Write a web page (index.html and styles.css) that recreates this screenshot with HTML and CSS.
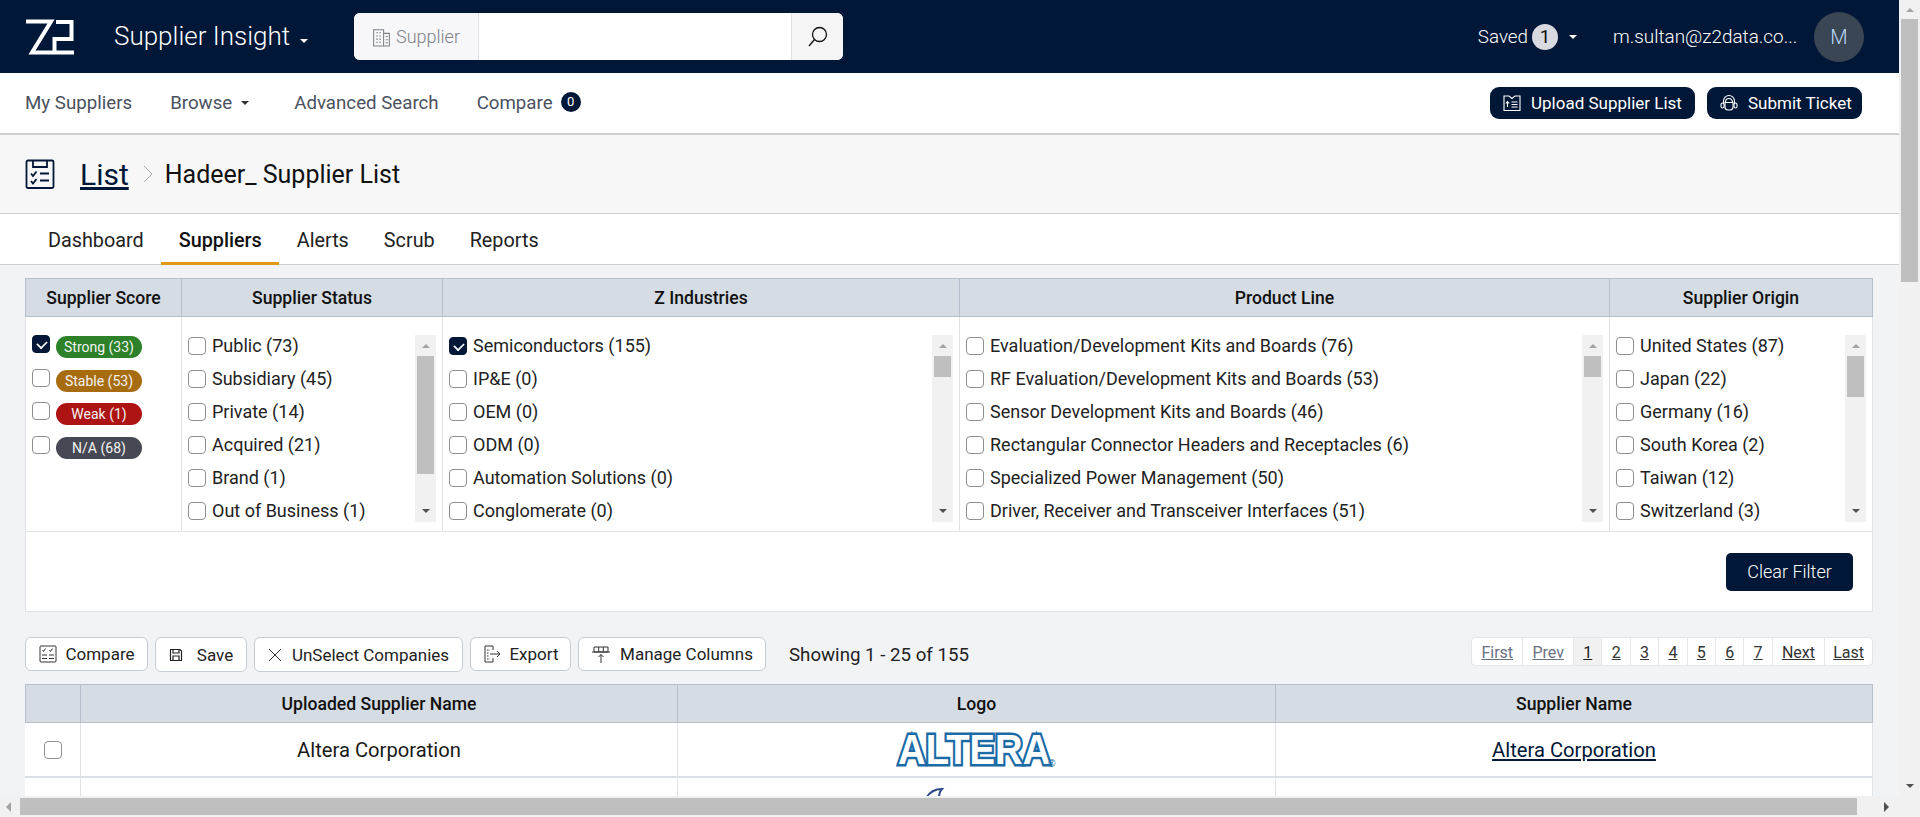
FILE: index.html
```html
<!DOCTYPE html>
<html lang="en">
<head>
<meta charset="utf-8">
<title>Supplier Insight</title>
<link rel="stylesheet" href="styles.css">
</head>
<body>
<div class="shell">
<div class="viewport">
<header class="topbar">
  <svg class="logo" viewBox="0 0 48 36" fill="none" stroke="#fff" stroke-width="4"><path d="M0 2.500H25L6 33.500H48M30 3H45.500V20H28.500V33.500"/></svg>
  <div class="app-title">Supplier Insight <span class="caret-w caret-title"></span></div>
  <div class="search">
    <div class="search-type">
      <svg class="i-building" viewBox="0 0 18 20" fill="none" stroke="#7c8088" stroke-width="1"><path d="M1.500 19V3.500H11V19ZM11 7H16.500V19H11M1 19H17M4 6.500H5.500M7 6.500H8.500M4 9.500H5.500M7 9.500H8.500M4 12.500H5.500M7 12.500H8.500M4 15.500H5.500M7 15.500H8.500M13 10H15M13 13H15M13 16H15"/></svg>
      <span>Supplier</span>
    </div>
    <div class="search-input"></div>
    <div class="search-btn"><svg class="i24" viewBox="0 0 24 24" fill="none" stroke="#111" stroke-width="1.300"><circle cx="13.500" cy="9.500" r="7"/><path d="M8.500 14.500L3 21"/></svg></div>
  </div>
  <div class="top-right">
    <div class="saved">Saved <span class="saved-count">1</span><span class="caret-w"></span></div>
    <div class="email">m.sultan@z2data.co...</div>
    <div class="avatar">M</div>
  </div>
</header>
<nav class="subnav">
  <a class="nav-item">My Suppliers</a>
  <a class="nav-item">Browse <span class="caret-d"></span></a>
  <a class="nav-item">Advanced Search</a>
  <a class="nav-item">Compare <span class="count-dot">0</span></a>
  <div class="nav-actions">
    <button class="pill-btn pill-upload">
      <svg class="i18" viewBox="0 0 18 18" fill="none" stroke="#fff" stroke-width="1.100"><path d="M1 2H6L9 4.500 12 2H17V16.500H1ZM4.500 13V8M2.800 9.500L4.500 7.500 6.200 9.500M8.500 8H14.500M8.500 10.500H14.500M8.500 13H14.500"/></svg>
      Upload Supplier List</button>
    <button class="pill-btn pill-ticket">
      <svg class="i18" viewBox="0 0 18 18" fill="none" stroke="#fff" stroke-width="1.100"><path d="M3.500 9.500V7a5.500 5.500 0 0 1 11 0V9.500"/><path d="M5.500 8A3.500 3.500 0 0 1 12.500 8"/><rect x="1" y="9" width="3" height="5" rx="1.500"/><rect x="14" y="9" width="3" height="5" rx="1.500"/><path d="M5 8.500H13V13a3 3 0 0 1-3 3H8a3 3 0 0 1-3-3Z"/></svg>
      Submit Ticket</button>
  </div>
</nav>
<section class="crumbs">
  <svg class="crumb-icon" viewBox="0 0 30 30" fill="none" stroke="#001737" stroke-width="1.800"><rect x="1.500" y="1.500" width="27" height="27.500" rx="1.500"/><path d="M8 1.500V8H22V1.500"/><path d="M6 14.500L8 17 11.500 12.500M15 14.500H24M6 22L8 24.500 11.500 20M15 21.500H24"/></svg>
  <a class="crumb-link">List</a>
  <svg class="crumb-sep" viewBox="0 0 10 18" fill="none" stroke="#aaa" stroke-width="1"><path d="M1 1L9 9 1 17"/></svg>
  <span class="crumb-current">Hadeer_ Supplier List</span>
</section>
<div class="tabs">
  <a class="tab">Dashboard</a>
  <a class="tab tab-active">Suppliers</a>
  <a class="tab">Alerts</a>
  <a class="tab">Scrub</a>
  <a class="tab">Reports</a>
</div>
<main class="content">
  <section class="filters">
    <div class="filter-grid">
      <div class="fh">Supplier Score</div>
      <div class="fh">Supplier Status</div>
      <div class="fh">Z Industries</div>
      <div class="fh">Product Line</div>
      <div class="fh">Supplier Origin</div>

      <div class="fb score">
        <label class="score-row"><span class="cb cb-on"></span><span class="tag tag-strong">Strong (33)</span></label>
        <label class="score-row"><span class="cb"></span><span class="tag tag-stable">Stable (53)</span></label>
        <label class="score-row"><span class="cb"></span><span class="tag tag-weak">Weak (1)</span></label>
        <label class="score-row"><span class="cb"></span><span class="tag tag-na">N/A (68)</span></label>
      </div>
      <div class="fb">
        <div class="list">
          <label class="row"><span class="cb"></span>Public (73)</label>
          <label class="row"><span class="cb"></span>Subsidiary (45)</label>
          <label class="row"><span class="cb"></span>Private (14)</label>
          <label class="row"><span class="cb"></span>Acquired (21)</label>
          <label class="row"><span class="cb"></span>Brand (1)</label>
          <label class="row"><span class="cb"></span>Out of Business (1)</label>
        </div>
        <div class="mini-sb"><span class="up"></span><div class="mini-track"><div class="mini-thumb th-status"></div></div><span class="down"></span></div>
      </div>
      <div class="fb">
        <div class="list">
          <label class="row"><span class="cb cb-on"></span>Semiconductors (155)</label>
          <label class="row"><span class="cb"></span>IP&amp;E (0)</label>
          <label class="row"><span class="cb"></span>OEM (0)</label>
          <label class="row"><span class="cb"></span>ODM (0)</label>
          <label class="row"><span class="cb"></span>Automation Solutions (0)</label>
          <label class="row"><span class="cb"></span>Conglomerate (0)</label>
        </div>
        <div class="mini-sb"><span class="up"></span><div class="mini-track"><div class="mini-thumb th-small"></div></div><span class="down"></span></div>
      </div>
      <div class="fb">
        <div class="list">
          <label class="row"><span class="cb"></span>Evaluation/Development Kits and Boards (76)</label>
          <label class="row"><span class="cb"></span>RF Evaluation/Development Kits and Boards (53)</label>
          <label class="row"><span class="cb"></span>Sensor Development Kits and Boards (46)</label>
          <label class="row"><span class="cb"></span>Rectangular Connector Headers and Receptacles (6)</label>
          <label class="row"><span class="cb"></span>Specialized Power Management (50)</label>
          <label class="row"><span class="cb"></span>Driver, Receiver and Transceiver Interfaces (51)</label>
        </div>
        <div class="mini-sb"><span class="up"></span><div class="mini-track"><div class="mini-thumb th-small"></div></div><span class="down"></span></div>
      </div>
      <div class="fb">
        <div class="list">
          <label class="row"><span class="cb"></span>United States (87)</label>
          <label class="row"><span class="cb"></span>Japan (22)</label>
          <label class="row"><span class="cb"></span>Germany (16)</label>
          <label class="row"><span class="cb"></span>South Korea (2)</label>
          <label class="row"><span class="cb"></span>Taiwan (12)</label>
          <label class="row"><span class="cb"></span>Switzerland (3)</label>
        </div>
        <div class="mini-sb"><span class="up"></span><div class="mini-track"><div class="mini-thumb th-origin"></div></div><span class="down"></span></div>
      </div>
    </div>
    <div class="filter-foot"><button class="clear">Clear Filter</button></div>
  </section>
  <div class="toolbar">
    <button class="tool t-compare"><svg class="i20" viewBox="0 0 20 20" fill="none" stroke="#333" stroke-width="1"><rect x="2" y="2" width="16" height="16" rx="1"/><path d="M4.500 6L5.500 7.500 7.500 4.500M11.500 6L12.500 7.500 14.500 4.500M4 11H9M11 11H16M4 14.500H9M11 14.500H16"/></svg>Compare</button>
    <button class="tool t-save"><svg class="i14" viewBox="0 0 14 14" fill="none" stroke="#222" stroke-width="1.200"><path d="M1.500 1.500H11L12.500 3V12.500H1.500ZM4 1.500V5H10V1.500M4 12.500V8H10V12.500"/></svg>Save</button>
    <button class="tool t-unselect"><svg class="i14" viewBox="0 0 14 14" fill="none" stroke="#333" stroke-width="1"><path d="M1 1L13 13M13 1L1 13"/></svg>UnSelect Companies</button>
    <button class="tool t-export"><svg class="i20" viewBox="0 0 20 20" fill="none" stroke="#333" stroke-width="1"><path d="M11 6V2H3V18H11V14"/><path d="M5 6H8M5 9H7M5 12H7M5 15H8" stroke-dasharray="1.500 1"/><path d="M8 10H18M15 7L18 10 15 13"/></svg>Export</button>
    <button class="tool t-manage"><svg class="i20" viewBox="0 0 20 20" fill="none" stroke="#333" stroke-width="1"><path d="M3 3H17V8H3ZM7.700 3V8M12.300 3V8M1 8H19M10 19V10.500M7.500 13L10 10.500 12.500 13"/></svg>Manage Columns</button>
    <div class="showing">Showing 1 - 25 of 155</div>
    <div class="pager">
      <a class="pg pg-off">First</a><a class="pg pg-off">Prev</a><a class="pg pg-cur">1</a><a class="pg">2</a><a class="pg">3</a><a class="pg">4</a><a class="pg">5</a><a class="pg">6</a><a class="pg">7</a><a class="pg">Next</a><a class="pg">Last</a>
    </div>
  </div>
  <section class="results">
    <div class="rh"></div><div class="rh">Uploaded Supplier Name</div><div class="rh">Logo</div><div class="rh">Supplier Name</div>
    <div class="rc rc-check"><span class="cb"></span></div>
    <div class="rc">Altera Corporation</div>
    <div class="rc"><svg class="altera" viewBox="0 -14 162 56"><text y="32.500" transform="translate(2 0) scale(.89 1)" class="altera-text">ALTERA</text><text x="152" y="36" class="altera-r">®</text></svg></div>
    <div class="rc"><a class="link">Altera Corporation</a></div>
    <div class="rc rc-next"></div><div class="rc rc-next"></div>
    <div class="rc rc-next"><svg class="logo2" viewBox="0 0 108 20" fill="none"><path d="M3 10C6 5 12 1 19 1C17 3 16 6 16 10" stroke="#2b4a8c" stroke-width="2"/><path d="M28 9H34" stroke="#888" stroke-width="1"/></svg></div>
    <div class="rc rc-next"></div>
  </section>
</main>
<div class="hbar"><span class="arr-left"></span><div class="hthumb"></div><span class="arr-right"></span></div>
</div>
<div class="vbar"><span class="up"></span><div class="vtrack"><div class="vthumb"></div></div><span class="down"></span></div>
</div>
</body>
</html>
```
FILE: styles.css
```css
* { box-sizing: border-box; }
html, body { margin: 0; height: 100%; overflow: hidden; }
body { font-family: Roboto, "Liberation Sans", sans-serif; color: #111; background: #f1f3f5; }
button { font-family: inherit; cursor: pointer; }
.shell { display: flex; width: 1920px; height: 817px; }
.viewport { width: 1899px; height: 817px; overflow: hidden; position: relative; }

.topbar { height: 73px; background: #001737; color: #fff; display: flex; align-items: center; padding-left: 26px; }
.logo { width: 48px; height: 36px; flex: none; }
.app-title { margin-left: 40px; width: 240px; font-size: 26px; font-weight: 300; white-space: nowrap; padding-bottom: 2px; }
.caret-w { display: inline-block; border: 4px solid transparent; border-top-color: #fff; border-bottom-width: 0; vertical-align: middle; margin-left: 3px; }
.caret-title { margin-left: 4px; margin-top: 6px; }
.caret-d { display: inline-block; border: 4px solid transparent; border-top-color: #333; border-bottom-width: 0; vertical-align: middle; margin: 0 7px 0 9px; }
.search { width: 489px; height: 47px; display: flex; background: #fff; border-radius: 6px; overflow: hidden; }
.search-type { width: 125px; background: #f7f7fa; border-right: 1px solid #dde; display: flex; align-items: center; gap: 5px; padding-left: 18px; color: #7c8088; font-size: 18px; font-weight: 300; }
.search-input { flex: 1; }
.search-btn { width: 52px; background: #f5f5f5; border-left: 1px solid #e2e2e2; display: flex; align-items: center; justify-content: center; }
.i18 { width: 18px; height: 18px; flex: none; }
.i-building { width: 19px; height: 21px; flex: none; }
.i24 { width: 24px; height: 24px; }
.i20 { width: 20px; height: 20px; flex: none; }
.i14 { width: 14px; height: 14px; flex: none; }
.top-right { margin-left: auto; display: flex; align-items: center; padding-right: 35px; font-weight: 300; }
.saved { font-size: 18.800px; display: flex; align-items: center; font-weight: 300; }
.saved-count { width: 26px; height: 26px; border-radius: 50%; background: #d8dae0; color: #111; display: inline-flex; align-items: center; justify-content: center; margin-left: 4px; margin-right: 8px; font-weight: 400; }
.email { font-size: 18.900px; margin-left: 36px; width: 191px; white-space: nowrap; }
.avatar { width: 50px; height: 50px; border-radius: 50%; background: #3a4654; display: flex; align-items: center; justify-content: center; font-size: 20px; color: #b9d8f5; margin-left: 10px; }

.subnav { height: 62px; background: #fff; border-bottom: 2px solid #cfcfcf; display: flex; align-items: center; padding: 0 37px 0 25px; }
.nav-item { font-size: 18.700px; color: #4a5160; margin-right: 38px; display: flex; align-items: center; white-space: nowrap; }
.count-dot { width: 20px; height: 20px; border-radius: 50%; background: #001737; color: #fff; font-size: 13px; display: inline-flex; align-items: center; justify-content: center; margin: -3px 0 0 8px; }
.nav-actions { margin-left: auto; display: flex; gap: 12px; }
.pill-btn { height: 32px; border: 0; border-radius: 9px; background: #001737; color: #fff; font-size: 17px; display: flex; align-items: center; gap: 10px; padding: 0 13px; white-space: nowrap; }
.pill-upload { width: 205px; }
.pill-ticket { width: 155px; }

.crumbs { height: 79px; background: #f7f7f7; border-bottom: 1px solid #cfcfcf; display: flex; align-items: center; padding-left: 25px; }
.crumb-icon { width: 30px; height: 30px; }
.crumb-link { font-size: 30px; color: #001737; text-decoration: underline; margin-left: 25px; }
.crumb-sep { width: 10px; height: 18px; margin: 0 12px 0 14px; }
.crumb-current { font-size: 25px; color: #111; }

.tabs { height: 51px; background: #fff; border-bottom: 1px solid #cfcfcf; display: flex; padding-left: 30.500px; }
.tab { height: 51px; padding: 15px 17.500px 0; font-size: 19.800px; color: #222; }
.tab-active { font-weight: 500; border-bottom: 3px solid #e09a12; color: #111; }

.content { padding: 13px 26px 0 25px; }
.filters { width: 1848px; background: #fff; border: 1px solid #e0e3e8; border-top: 0; }
.filter-grid { display: grid; grid-template-columns: 157px 261px 517px 650px 1fr; margin: 0 -1px; }
.fh { height: 39px; background: #d5dce3; border: 1px solid #b5c0cc; border-left-width: 0; font-size: 17.600px; font-weight: 500; display: flex; align-items: center; justify-content: center; }
.fh:first-child { border-left-width: 1px; }
.fb { height: 215px; border-right: 1px solid #e0e3e8; border-bottom: 1px solid #e0e3e8; display: flex; padding: 12px 6px 0 6px; }
.fb:nth-child(6) { border-left: 1px solid #e0e3e8; }
.score { flex-direction: column; gap: 11.500px; padding-top: 19px; }
.score-row { display: flex; align-items: flex-start; gap: 6px; height: 22px; }
.score-row .cb { margin-top: -1px; }
.list { flex: 1; min-width: 0; }
.row { display: flex; align-items: center; gap: 6px; height: 33px; font-size: 18px; color: #222; white-space: nowrap; }
.cb { width: 18px; height: 18px; flex: none; border: 1px solid #8f8f8f; border-radius: 4px; background: #fff; position: relative; }
.cb-on { background: #001737; border-color: #001737; }
.cb-on::after { content: ""; position: absolute; left: 5px; top: 2px; width: 6px; height: 9px; transform: rotate(45deg) scale(.85); border: solid #fff; border-width: 0 2px 2px 0; }
.tag { width: 86px; height: 22px; border-radius: 11px; color: #f3f3f3; font-size: 14px; display: flex; align-items: center; justify-content: center; }
.tag-strong { background: #2c8129; }
.tag-stable { background: #a86c10; }
.tag-weak { background: #ae1313; }
.tag-na { background: #464853; }

.mini-sb { width: 21px; height: 187px; margin-top: 6px; background: #f1f1f1; display: flex; flex-direction: column; align-items: center; flex: none; }
.up, .down { display: block; flex: none; width: 0; height: 0; border: 4.500px solid transparent; }
.up { border-bottom-color: #a3a3a3; border-top-width: 0; margin: 9px 0 8px; }
.down { border-top-color: #505050; border-bottom-width: 0; margin: 8px 0 9px; }
.mini-track { flex: 1; width: 17px; }
.mini-thumb { width: 17px; background: #bfbfbf; margin-top: 0; }
.th-status { height: 118px; }
.th-small { height: 21px; }
.th-origin { height: 41px; }

.filter-foot { height: 79px; display: flex; align-items: center; justify-content: flex-end; padding-right: 19px; }
.clear { width: 127px; height: 38px; border: 0; border-radius: 5px; background: #001737; color: #fff; font-size: 18px; font-weight: 300; }

.toolbar { display: flex; align-items: flex-start; gap: 7px; height: 35px; margin-top: 25px; width: 1848px; }
.tool { height: 34px; background: #fff; border: 1px solid #c6ccd3; border-radius: 6px; font-size: 17px; color: #222; display: flex; align-items: center; justify-content: center; gap: 7px; padding: 0; white-space: nowrap; }
.t-compare { width: 123px; }
.t-save { width: 92px; height: 35px; gap: 14px; }
.t-unselect { width: 209px; height: 35px; gap: 10px; }
.t-export { width: 101px; }
.t-manage { width: 188px; gap: 9px; }
.showing { font-size: 18.700px; margin-left: 16px; line-height: 37px; color: #222; }
.pager { margin-left: auto; height: 29px; display: flex; background: #fff; border: 1px solid #e2e5e9; border-radius: 4px; overflow: hidden; }
.pg { font-size: 16px; color: #333; text-decoration: underline; padding: 0 9.200px; line-height: 29px; border-right: 1px solid #e6e8ec; }
.pg:last-child { border-right: 0; padding: 0 8px; }
.pg-off { color: #6a7283; }
.pg-cur { background: #f1f1f1; color: #222; }

.results { margin-top: 12px; width: 1848px; display: grid; grid-template-columns: 56px 597px 598px 1fr; grid-auto-rows: auto; background: #fff; }
.rh { height: 39px; background: #d5dce3; border: 1px solid #b5c0cc; border-left-width: 0; font-size: 17.600px; font-weight: 500; display: flex; align-items: center; justify-content: center; }
.rh:first-child { border-left-width: 1px; }
.rc { height: 55px; border-right: 1px solid #e0e3e8; border-bottom: 2px solid #dcdfe3; display: flex; align-items: center; justify-content: center; font-size: 20.200px; color: #1a1a1a; }
.rc-check { padding-left: 1px; }
.rc-next { height: 40px; border-bottom: 0; align-items: flex-start; overflow: hidden; }
.link { color: #001737; text-decoration: underline; }
.altera { width: 162px; height: 56px; margin-bottom: 10px; flex: none; }
.altera-text { font-family: "Liberation Sans", sans-serif; font-size: 43px; font-weight: 700; fill: #fff; stroke: #1a6aa5; stroke-width: 5px; paint-order: stroke; stroke-linejoin: miter; }
.altera-r { font-family: "Liberation Sans", sans-serif; font-size: 10px; fill: #1a6aa5; }
.logo2 { width: 108px; height: 20px; margin-top: 10px; }

.hbar { position: absolute; left: 0; right: 0; bottom: 0; height: 21px; background: #f1f1f1; display: flex; align-items: center; }
.arr-left, .arr-right { width: 0; height: 0; border: 5px solid transparent; flex: none; }
.arr-left { border-right-color: #a3a3a3; border-left-width: 0; margin: 0 9px 0 6px; }
.arr-right { border-left-color: #505050; border-right-width: 0; margin-left: 27px; }
.hthumb { width: 1837px; height: 17px; background: #bfbfbf; }

.vbar { width: 21px; height: 817px; background: #f1f1f1; display: flex; flex-direction: column; align-items: center; }
.vtrack { flex: 1; width: 17px; }
.vthumb { height: 263px; width: 17px; background: #bfbfbf; }
.vbar .up { margin: 8px 0 7px; }
.vbar .down { margin: 0 0 29px; }
```
